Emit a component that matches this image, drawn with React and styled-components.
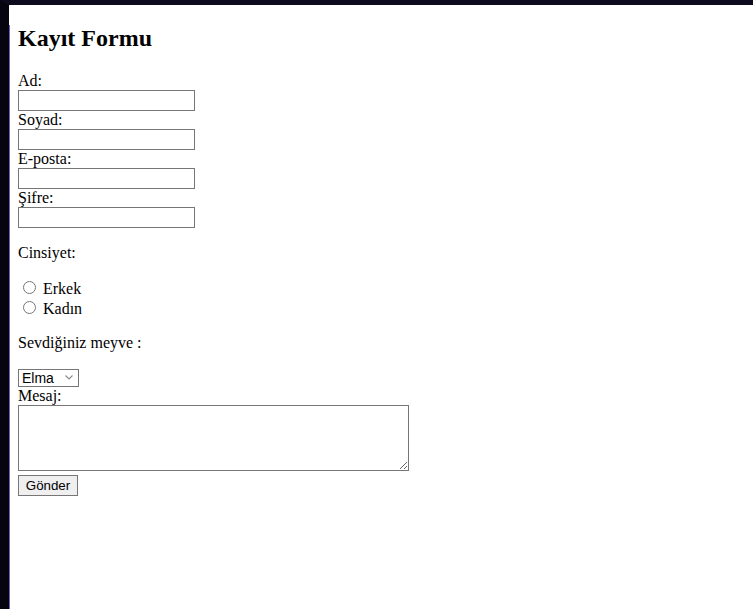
import React from 'react';
import styled, { createGlobalStyle } from 'styled-components';

const GlobalStyle = createGlobalStyle`
  html, body {
    margin: 0;
    background: #ffffff;
  }

  body {
    font-family: "Liberation Serif", "Times New Roman", serif;
    font-size: 16px;
    color: #000000;
  }
`;

const Frame = styled.div`
  min-height: 604px;
  border-top: 5px solid #0c0a1c;
  border-left: 9px solid #06050f;
`;

const Page = styled.div`
  min-height: 604px;
  border-left: 1px solid #6f5fb8;
  padding: 0 8px;
`;

const Title = styled.h2`
  margin: 19.92px 0;
  font-size: 24px;
  font-weight: bold;
`;

const Label = styled.label`
  display: block;
  line-height: 18px;
`;

const TextInput = styled.input`
  display: block;
  box-sizing: border-box;
  width: 177px;
  height: 21px;
  margin: 0;
  padding: 1px 2px;
  border: 1px solid #767676;
  border-radius: 0;
  font-family: "Liberation Sans", Arial, sans-serif;
  font-size: 13.33px;
  background: #ffffff;
`;

const Para = styled.p`
  margin: 16px 0;
  line-height: 18px;
`;

const RadioRow = styled.div`
  input {
    margin: 3px 3px 0 5px;
  }
`;

const SelectWrap = styled.div`
  position: relative;
  width: 61px;
  padding-top: 1px;
`;

const Select = styled.select`
  appearance: none;
  display: block;
  box-sizing: border-box;
  width: 61px;
  height: 18px;
  margin: 0;
  padding: 0 0 0 3px;
  border: 1px solid #767676;
  border-radius: 0;
  font-family: "Liberation Sans", Arial, sans-serif;
  font-size: 14px;
  line-height: 16px;
  color: #000000;
  background: #ffffff;
  outline: none;
`;

const Chevron = styled.svg`
  position: absolute;
  right: 6px;
  top: 7px;
  width: 8px;
  height: 5px;
  pointer-events: none;
`;

const TextArea = styled.textarea`
  display: block;
  box-sizing: border-box;
  width: 391px;
  height: 66px;
  margin: 0;
  padding: 2px;
  border: 1px solid #767676;
  border-radius: 0;
  font-family: "Liberation Mono", monospace;
  font-size: 13.33px;
`;

const Button = styled.button`
  display: block;
  box-sizing: border-box;
  width: 60px;
  height: 21px;
  margin: 4px 0 0;
  padding: 1px 6px;
  border: 1px solid #767676;
  border-radius: 0;
  background: #efefef;
  font-family: "Liberation Sans", Arial, sans-serif;
  font-size: 13.33px;
  color: #000000;
`;

const fields = [
  { id: 'ad', label: 'Ad:', type: 'text' },
  { id: 'soyad', label: 'Soyad:', type: 'text' },
  { id: 'eposta', label: 'E-posta:', type: 'email' },
  { id: 'sifre', label: 'Şifre:', type: 'password' },
];

export default function App() {
  return (
    <>
      <GlobalStyle />
      <Frame>
        <Page>
          <Title>Kayıt Formu</Title>
          <form onSubmit={(e) => e.preventDefault()}>
            {fields.map((f) => (
              <div key={f.id}>
                <Label htmlFor={f.id}>{f.label}</Label>
                <TextInput id={f.id} name={f.id} type={f.type} />
              </div>
            ))}

            <Para>Cinsiyet:</Para>
            <RadioRow>
              <input type="radio" id="erkek" name="cinsiyet" value="erkek" />{' '}
              <label htmlFor="erkek">Erkek</label>
            </RadioRow>
            <RadioRow>
              <input type="radio" id="kadin" name="cinsiyet" value="kadin" />{' '}
              <label htmlFor="kadin">Kadın</label>
            </RadioRow>

            <Para>Sevdiğiniz meyve :</Para>
            <SelectWrap>
              <Select name="meyve" defaultValue="elma">
                <option value="elma">Elma</option>
                <option value="armut">Armut</option>
                <option value="muz">Muz</option>
              </Select>
              <Chevron viewBox="0 0 8 5">
                <path d="M0.5 0.5 L4 4 L7.5 0.5" fill="none" stroke="#8a8a8a" strokeWidth="1.1" />
              </Chevron>
            </SelectWrap>

            <Label htmlFor="mesaj">Mesaj:</Label>
            <TextArea id="mesaj" name="mesaj" />
            <Button type="submit">Gönder</Button>
          </form>
        </Page>
      </Frame>
    </>
  );
}
